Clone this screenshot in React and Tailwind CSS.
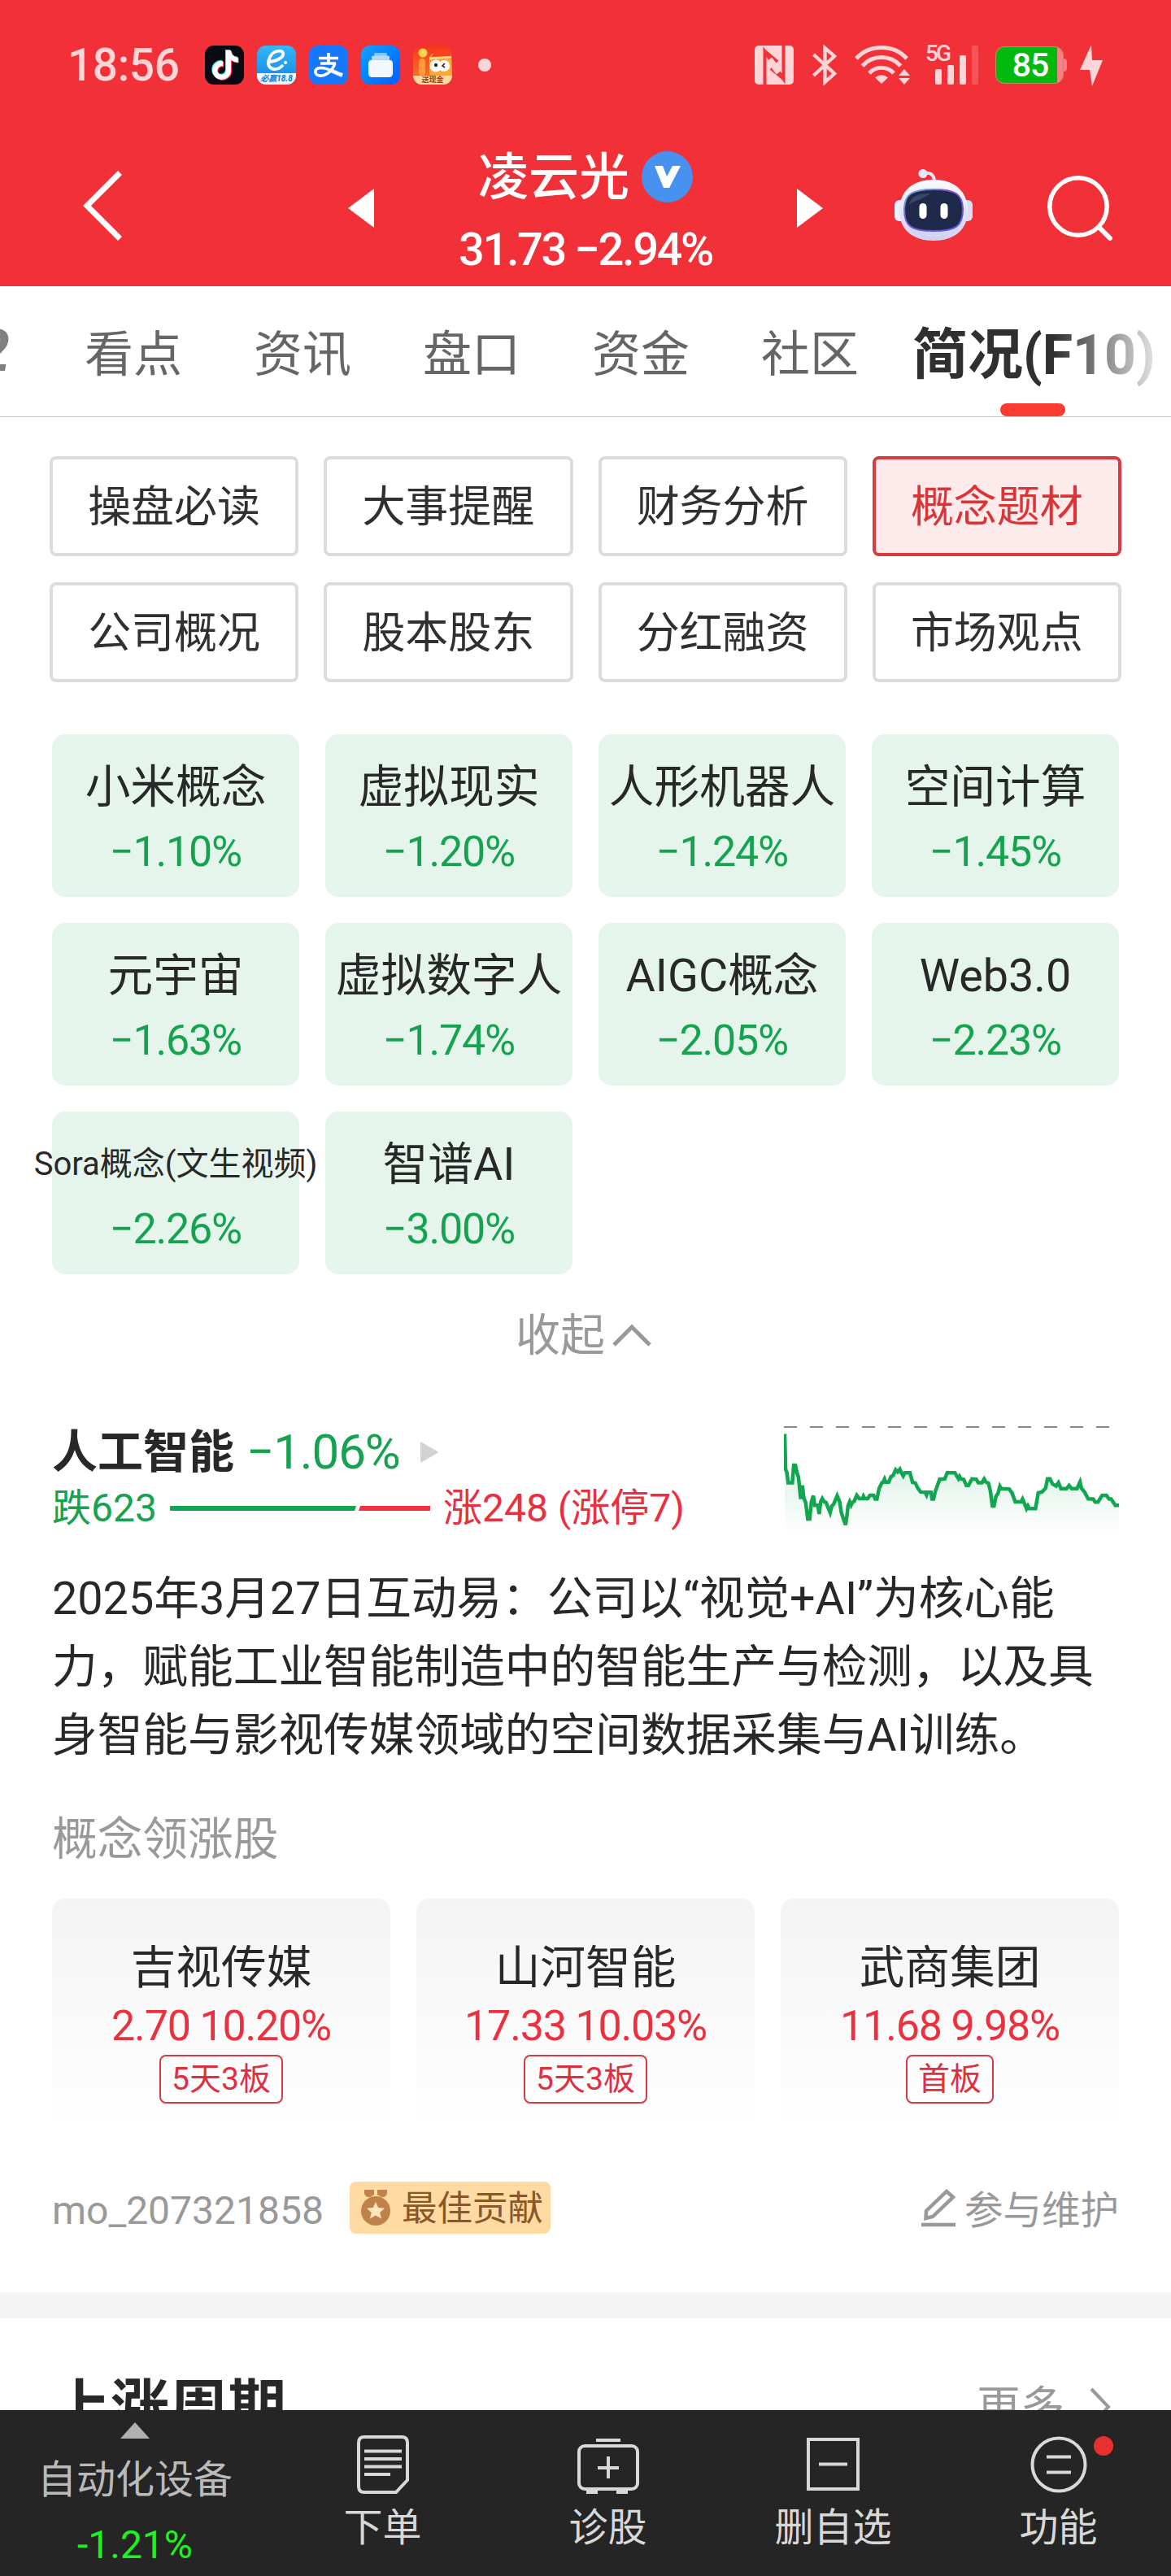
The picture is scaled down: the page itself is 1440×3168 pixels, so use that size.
import { FaTiktok } from 'react-icons/fa6';

const tabs = ['看点', '资讯', '盘口', '资金', '社区'];

const sections = [
    { label: '操盘必读' },
    { label: '大事提醒' },
    { label: '财务分析' },
    { label: '概念题材', active: true },
    { label: '公司概况' },
    { label: '股本股东' },
    { label: '分红融资' },
    { label: '市场观点' },
];

const concepts = [
    { name: '小米概念', change: '−1.10%' },
    { name: '虚拟现实', change: '−1.20%' },
    { name: '人形机器人', change: '−1.24%' },
    { name: '空间计算', change: '−1.45%' },
    { name: '元宇宙', change: '−1.63%' },
    { name: '虚拟数字人', change: '−1.74%' },
    { name: 'AIGC概念', change: '−2.05%' },
    { name: 'Web3.0', change: '−2.23%' },
    { name: 'Sora概念(文生视频)', change: '−2.26%', small: true },
    { name: '智谱AI', change: '−3.00%' },
];

const leaders = [
    { name: '吉视传媒', price: '2.70', change: '10.20%', tag: '5天3板' },
    { name: '山河智能', price: '17.33', change: '10.03%', tag: '5天3板' },
    { name: '武商集团', price: '11.68', change: '9.98%', tag: '首板' },
];

// intraday index line, x/y in the chart's viewBox
const trendLine =
    'M189 190 L192 320 L197 335 L201 370 L216 370 L221 306 L227 306 L233 335 L238 350 L246 430 L252 380 L257 425 L264 445 L271 503 L278 503 L284 440 L291 418 L296 453 L307 453 L312 485 L317 440 L323 428 L330 440 L337 443 L343 460 L351 480 L357 455 L363 450 L376 418 L385 440 L391 480 L399 505 L406 525 L411 490 L415 455 L421 440 L426 452 L430 443 L437 438 L446 416 L455 428 L467 428 L470 420 L474 428 L485 428 L493 416 L506 416 L512 430 L518 430 L526 390 L536 370 L540 368 L545 357 L549 368 L560 368 L568 348 L576 343 L585 322 L592 330 L600 320 L606 335 L612 345 L618 333 L636 333 L645 368 L655 371 L664 390 L674 404 L690 405 L695 415 L698 405 L711 405 L715 430 L720 430 L727 400 L742 357 L760 356 L769 333 L796 333 L803 345 L809 355 L813 347 L818 356 L828 358 L837 380 L845 380 L857 356 L872 357 L880 370 L893 370 L901 356 L908 368 L916 371 L923 400 L930 455 L936 455 L943 420 L950 410 L957 383 L962 392 L990 393 L1000 407 L1012 440 L1033 440 L1038 430 L1043 442 L1052 465 L1057 455 L1062 465 L1084 465 L1094 407 L1107 404 L1120 390 L1127 356 L1136 356 L1145 375 L1158 382 L1166 370 L1175 392 L1195 392 L1204 380 L1213 392 L1232 392 L1243 367 L1248 390 L1260 405 L1272 429 L1290 430 L1297 441 L1307 441 L1322 416 L1337 416 L1347 430 L1354 430 L1369 453 L1382 453';

const StatusBar = () => (
    <div className="h-[160px] flex items-center pl-[83px] pr-[84px]">
        <span className="w-[169px] text-[55px] leading-none font-medium text-[#fdd5d7] tracking-[-0.4px]">18:56</span>
        <div className="flex items-center gap-4">
            <div className="relative w-12 h-12 rounded-[11px] bg-[#0a0a14]">
                <FaTiktok size={36} color="#25f4ee" className="absolute left-[6px] top-[5px]" />
                <FaTiktok size={36} color="#fe2c55" className="absolute left-[8px] top-[7px]" />
                <FaTiktok size={36} color="#fff" className="absolute left-[7px] top-[6px]" />
            </div>
            <div className="w-12 h-12 rounded-[11px] overflow-hidden bg-gradient-to-b from-[#35b6f5] to-[#0b86e6] flex flex-col">
                <svg viewBox="0 0 48 34" className="w-12 h-[34px]">
                    <path d="M14 20 C22 20 34 15 32 9 C30 5 20 6 16 14 C11 24 16 29 22 29 C26 29 29 27 31 25" fill="none" stroke="#fff" strokeWidth="3.8" strokeLinecap="round" />
                    <circle cx="35" cy="21" r="2" fill="#fff" />
                </svg>
                <div className="h-[14px] bg-[#e8f7ff] text-[10px] leading-[13px] font-bold italic text-center text-[#0878d2] whitespace-nowrap">必赢18.8</div>
            </div>
            <div className="w-12 h-12 rounded-[11px] bg-[#1677ff]">
                <svg viewBox="0 0 48 48" className="w-12 h-12" fill="none" stroke="#fff">
                    <path d="M12 15.5 H36 M24 9 V22 M14 22 H33" strokeWidth="3.6" />
                    <path d="M32 22 C28 33 19 38 13 37 C6 36 6 28 14 27.500 C23 27 31 33 41 36" strokeWidth="3.6" />
                    <path d="M27 30.500 C32 33 36 35 41 36.500" strokeWidth="5" opacity=".75" />
                </svg>
            </div>
            <div className="w-12 h-12 rounded-[11px] bg-gradient-to-br from-[#1aa0ff] to-[#0a5cff]">
                <svg viewBox="0 0 48 48" className="w-12 h-12">
                    <rect x="16" y="9" width="16" height="4" rx="1.500" fill="#8ac4ff" />
                    <rect x="13" y="12.500" width="22" height="5" rx="1.500" fill="#b4d9ff" />
                    <rect x="9" y="17.500" width="30" height="21.500" rx="4.500" fill="#f1f8ff" />
                </svg>
            </div>
            <div className="w-12 h-12 rounded-[11px] overflow-hidden bg-gradient-to-b from-[#f3331f] to-[#fb7a2b] flex flex-col">
                <svg viewBox="0 0 48 37" className="w-12 h-[37px]">
                    <path d="M20 37 V16 C20 6 44 6 47 16 L48 37 Z" fill="#ffa63a" />
                    <path d="M27 8 C30 3 37 3 41 7 L46 6 V13 L22 14 Z" fill="#f7441f" />
                    <path d="M20 16 L47 14" stroke="#ffd98a" strokeWidth="2.500" />
                    <rect x="7" y="16" width="8" height="21" rx="4" fill="#ff9a3b" />
                    <circle cx="12" cy="9" r="5.500" fill="#ffd24c" />
                    <circle cx="28" cy="25" r="7.500" fill="#fff" />
                    <circle cx="38" cy="25" r="7" fill="#fff" />
                    <circle cx="28" cy="24" r="2.200" fill="#3a2222" />
                    <path d="M39 22 L36 25 L39 27" stroke="#3a2222" strokeWidth="1.600" fill="none" />
                </svg>
                <div className="h-[11px] bg-[#ffd9a0] text-[9px] leading-[10px] font-bold text-center text-[#9a3d10]">送现金</div>
            </div>
        </div>
        <span className="ml-8 w-4 h-4 rounded-full bg-[#fdd5d7]" />

        <div className="ml-auto flex items-center text-[#fdd5d7]">
            {/* NFC */}
            <svg viewBox="0 0 48 48" className="w-12 h-12">
                <rect width="48" height="48" rx="5" fill="currentColor" />
                <path d="M12.500 48 V7.500 L35.500 41 V0" fill="none" stroke="#f13038" strokeWidth="4" />
                <path d="M12.500 7 L28 20 M35.500 41 L20 28" fill="none" stroke="#f13038" strokeWidth="4" />
                <path d="M18 17 L30 33" stroke="currentColor" strokeWidth="8" />
            </svg>
            {/* Bluetooth */}
            <svg viewBox="0 0 30 50" className="ml-[23px] w-[30px] h-[50px]" fill="none" stroke="currentColor" strokeWidth="4.300">
                <path d="M1.500 12 L27 35.500 L15.500 46 V4 L27 14 L1.500 38" />
            </svg>
            {/* Wi-Fi */}
            <svg viewBox="0 0 68 48" className="ml-[22px] w-[68px] h-12" fill="none" stroke="currentColor" strokeWidth="5">
                <path d="M2 16 C18 -2 48 -2 64 16" />
                <path d="M9.500 25 C22 11 44 11 56.500 25" />
                <path d="M18 34 C26 25 40 25 48 34" />
                <path d="M33 47 L25 39.500 Q33 33 41 39.500 Z" fill="currentColor" stroke="none" />
                <path d="M54 37 L61 29 L68 37 Z M54 40 L61 48 L68 40 Z" fill="currentColor" stroke="none" />
            </svg>
            {/* Signal */}
            <div className="ml-[19px] w-[63px] h-12 flex items-end relative">
                <span className="absolute left-0 -top-[2px] text-[28px] leading-6 font-medium tracking-[-3px]">5G</span>
                <div className="ml-3 flex items-end gap-[7px]">
                    <span className="w-2 h-[19px] rounded-[2px] bg-current" />
                    <span className="w-2 h-6 rounded-[2px] bg-current" />
                    <span className="w-2 h-9 rounded-[2px] bg-current" />
                    <span className="w-2 h-12 rounded-[2px] bg-[#f5545a]" />
                </div>
            </div>
            {/* Battery */}
            <div className="ml-[23px] flex items-center">
                <div className="w-[84px] h-[46px] rounded-[11px] border border-[#b9935f] bg-[#f87f84] overflow-hidden">
                    <div className="w-[75px] h-full bg-[#05b80f] text-white text-[41px] leading-[45px] font-medium text-center pl-[9px] tracking-[-1px]">85</div>
                </div>
                <span className="w-1 h-4 rounded-r-[4px] bg-[#f87f84]" />
            </div>
            <svg viewBox="0 0 28 51" className="ml-4 w-7 h-[51px]" fill="currentColor">
                <path d="M14 0 L0 31 H12 L15 51 L28 19 H15 Z" />
            </svg>
        </div>
    </div>
);

const Robot = () => (
    <svg viewBox="0 0 96 88" className="ml-[88px] -mt-2 w-24 h-[88px]">
        <defs>
            <linearGradient id="shell" x1="0" y1="0" x2="0" y2="1">
                <stop offset="0" stopColor="#fbfaff" />
                <stop offset="1" stopColor="#cfd0f0" />
            </linearGradient>
            <linearGradient id="rim" x1="0" y1="0" x2="1" y2="1">
                <stop offset="0" stopColor="#5ac6d8" />
                <stop offset=".4" stopColor="#7b4fd0" />
                <stop offset="1" stopColor="#4f5be8" />
            </linearGradient>
        </defs>
        <path d="M35 6 C44 2 49 8 49 15" fill="none" stroke="#e6e2f8" strokeWidth="4" />
        <circle cx="35" cy="5.500" r="5.500" fill="#eae6fb" />
        <rect x="0" y="38" width="14" height="26" rx="6" fill="#eeeefc" />
        <rect x="82" y="38" width="14" height="26" rx="6" fill="#dcdcf6" />
        <path d="M48 13 C77 13 90 30 90 51 C90 75 73 88 48 88 C23 88 6 75 6 51 C6 30 19 13 48 13 Z" fill="url(#shell)" />
        <path d="M48 25 C74 25 84 30 84 50 C84 71 74 76 48 76 C22 76 12 71 12 50 C12 30 22 25 48 25 Z" fill="#1f2a4a" stroke="url(#rim)" strokeWidth="2" />
        <path d="M18 43 C21 32 30 30 44 30 C36 36 28 38 18 43 Z" fill="#39456a" />
        <rect x="30.500" y="42" width="9" height="19" rx="4.500" fill="#fff" />
        <rect x="56.500" y="42" width="9" height="19" rx="4.500" fill="#fff" />
    </svg>
);

const Header = () => (
    <header className="h-[352px] bg-[#f13038] text-white">
        <StatusBar />
        <div className="h-48 flex items-center pl-[102px]">
            <svg viewBox="0 0 48 86" className="-mt-[6px] w-12 h-[86px]" fill="none" stroke="currentColor" strokeWidth="7">
                <path d="M45.500 2.500 L5 43 L45.500 83.500" />
            </svg>
            <svg viewBox="0 0 32 48" className="ml-[278px] w-8 h-12" fill="currentColor">
                <path d="M32 0 L0 24 L32 48 Z" />
            </svg>
            <div className="w-[520px] self-start pt-[25px] flex flex-col items-center">
                <div className="h-16 flex items-center">
                    <span className="text-[62px] leading-[64px] pt-1 font-medium">凌云光</span>
                    <span className="ml-[15px] w-[63px] h-[63px] rounded-full bg-[#4991ee] flex items-center justify-center">
                        <svg viewBox="0 0 32 27" className="w-8 h-[27px]" fill="#fff">
                            <path d="M0 0 H10 L15 13 L22 0 H32 L18 27 H11 Z" />
                        </svg>
                    </span>
                </div>
                <span className="mt-[26px] h-16 text-[56px] leading-[64px] font-medium tracking-[-2.4px] whitespace-nowrap">31.73 −2.94%</span>
            </div>
            <svg viewBox="0 0 32 48" className="w-8 h-12" fill="currentColor">
                <path d="M0 0 L32 24 L0 48 Z" />
            </svg>
            <Robot />
            <svg viewBox="0 0 80 80" className="ml-[92px] w-20 h-20" fill="none" stroke="currentColor" strokeWidth="5.500">
                <circle cx="38" cy="38" r="35.200" />
                <path d="M63 63 L77 77" strokeWidth="6" strokeLinecap="round" />
            </svg>
        </div>
    </header>
);

const Tabs = () => (
    <div className="relative h-[161px] border-b border-[#c6c6c6] flex overflow-hidden text-[60px] leading-[160px] text-[#666] whitespace-nowrap">
        <span className="w-[104px] shrink-0 -ml-[28px] mr-[28px] text-[72px] font-bold italic text-[#808080]">2</span>
        <div className="flex gap-[88px] pt-[5px]">
            {tabs.map((tab) => (
                <span key={tab}>{tab}</span>
            ))}
        </div>
        <div className="ml-[66px] flex flex-col items-center relative">
            <span className="text-[68px] font-bold text-[#303030] pt-[5px]">简况(F10)</span>
            <span className="absolute bottom-0 left-[108px] w-20 h-4 rounded-full bg-[#fb3c31]" />
        </div>
        <div className="absolute right-0 top-0 w-[144px] h-[140px] bg-gradient-to-r from-transparent to-white" />
    </div>
);

const TrendChart = () => (
    <svg viewBox="186 156 1196 404" preserveAspectRatio="none" className="w-[412px] h-[135px]">
        <defs>
            <linearGradient id="fade" x1="0" y1="310" x2="0" y2="560" gradientUnits="userSpaceOnUse">
                <stop offset="0" stopColor="#12a650" stopOpacity=".14" />
                <stop offset="1" stopColor="#12a650" stopOpacity="0" />
            </linearGradient>
        </defs>
        <path d="M186 165 H1382" stroke="#888" strokeWidth="6" strokeDasharray="46.450 46.450" />
        <path d={`${trendLine} V560 H189 Z`} fill="url(#fade)" />
        <path d={trendLine} fill="none" stroke="#12a650" strokeWidth="4.500" vectorEffect="non-scaling-stroke" />
    </svg>
);

const navItems = [
    {
        label: '下单',
        icon: (
            <svg viewBox="0 0 64 72" className="w-16 h-[72px]" fill="none" stroke="currentColor" strokeWidth="4">
                <path d="M9 2 H55 Q62 2 62 9 V55 L48 70 H9 Q2 70 2 63 V9 Q2 2 9 2 Z" />
                <path d="M9 19.500 H55 M9 29 H55 M9 38.500 H55 M9 48 H41" />
            </svg>
        ),
    },
    {
        label: '诊股',
        icon: (
            <svg viewBox="0 0 76 72" className="w-[76px] h-[72px]" fill="none" stroke="currentColor" strokeWidth="4">
                <rect x="2" y="13" width="72" height="53" rx="7" />
                <path d="M23 6 H53 M38 26 V53 M25 40 H51" />
                <path d="M11 70 H25 M48 70 H62" />
            </svg>
        ),
    },
    {
        label: '删自选',
        icon: (
            <svg viewBox="0 0 65 72" className="w-[65px] h-[72px]" fill="none" stroke="currentColor" strokeWidth="4">
                <rect x="2" y="5" width="61" height="61" />
                <path d="M15 35.500 H50" />
            </svg>
        ),
    },
    {
        label: '功能',
        badge: true,
        icon: (
            <svg viewBox="0 0 70 72" className="w-[70px] h-[72px]" fill="none" stroke="currentColor" strokeWidth="4">
                <circle cx="35" cy="36" r="32.500" />
                <path d="M20 26.500 H50 M20 45.500 H50" />
            </svg>
        ),
    },
];

const BottomNav = () => (
    <nav className="h-[204px] shrink-0 bg-[#252525] text-[#d8d8d8] text-[48px] flex">
        <div className="w-[332px] flex flex-col items-center text-[#bababa]">
            <svg viewBox="0 0 36 20" className="mt-[15px] w-9 h-5" fill="#b0b0b0">
                <path d="M18 0 L36 20 H0 Z" />
            </svg>
            <span className="mt-[21px] leading-[60px]">自动化设备</span>
            <span className="mt-[20px] leading-[60px] text-[#1cf51c]">-1.21%</span>
        </div>
        {navItems.map((item) => (
            <div key={item.label} className="relative w-[277px] pt-[31px] flex flex-col items-center">
                {item.icon}
                <span className="mt-[12px] leading-[60px]">{item.label}</span>
                {item.badge && <span className="absolute left-[182px] top-8 w-6 h-6 rounded-full bg-[#e83030]" />}
            </div>
        ))}
    </nav>
);

const App = () => {
    return (
        <div className="w-[1440px] h-[3168px] overflow-hidden flex flex-col bg-white text-[#282828] font-['Roboto','Noto_Sans_CJK_SC',sans-serif]">
            <Header />
            <main className="flex-1 min-h-0 overflow-hidden">
                <Tabs />

                {/* F10 sections */}
                <div className="mt-12 pl-[61px] pr-[61px] grid grid-cols-4 gap-x-[31px] gap-y-8">
                    {sections.map((s) => (
                        <button
                            key={s.label}
                            className={`h-[123px] rounded-[8px] border-4 text-[53px] leading-none pt-1 ${s.active ? 'border-[#d83a3e] bg-[#fdeaeb] text-[#dc3337]' : 'border-[#dcdcdc] text-[#303030]'}`}
                        >
                            {s.label}
                        </button>
                    ))}
                </div>

                {/* Concept tiles */}
                <div className="mt-16 px-16 grid grid-cols-4 gap-8">
                    {concepts.map((c) => (
                        <div key={c.name} className="h-[200px] rounded-2xl bg-[#e5f5eb] flex flex-col items-center whitespace-nowrap">
                            <span className={`mt-[33px] leading-[64px] ${c.small ? 'text-[40px]' : 'text-[55.7px]'}`}>{c.name}</span>
                            <span className="mt-[16px] text-[52px] leading-[64px] text-[#16a34f] tracking-[-1.2px]">{c.change}</span>
                        </div>
                    ))}
                </div>

                <div className="mt-[43px] pr-[5px] h-16 flex items-center justify-center text-[55px] text-[#999]">
                    <span className="leading-[64px]">收起</span>
                    <svg viewBox="0 0 48 28" className="ml-[9px] w-12 h-7" fill="none" stroke="currentColor" strokeWidth="5">
                        <path d="M2 26 L24 4 L46 26" />
                    </svg>
                </div>

                <div className="mt-[78px] px-16 flex justify-between">
                    <div className="pt-[2px]">
                        <div className="h-16 flex items-center">
                            <span className="text-[56px] leading-[64px] font-bold">人工智能</span>
                            <span className="ml-[15px] text-[60px] leading-[64px] text-[#16a34f] tracking-[-1.1px]">−1.06%</span>
                            <svg viewBox="0 0 22 26" className="ml-[25px] w-[22px] h-[26px]" fill="#d2d2d2">
                                <path d="M0 2 Q0 0 2 1 L21 12 Q22 13 21 14 L2 25 Q0 26 0 24 Z" />
                            </svg>
                        </div>
                        <div className="mt-[7px] h-[60px] flex items-center text-[48px] leading-[60px]">
                            <span className="text-[#16a34f]">跌623</span>
                            <svg viewBox="0 0 320 6" className="ml-[16px] w-80 h-[6px]">
                                <path d="M1 0 H229 L227 6 H1 Q0 6 0 5 V1 Q0 0 1 0 Z" fill="#12a650" />
                                <path d="M234 0 H320 V6 H232 Z" fill="#f2303e" />
                            </svg>
                            <span className="ml-[16px] text-[#ea3040]">涨248 (涨停7)</span>
                        </div>
                    </div>
                    <TrendChart />
                </div>

                <p className="mt-[37px] px-16 text-[55.7px] leading-[84px] whitespace-nowrap">
                    2025年3月27日互动易：公司以“视觉+AI”为核心能
                    <br />
                    力，赋能工业智能制造中的智能生产与检测，以及具
                    <br />
                    身智能与影视传媒领域的空间数据采集与AI训练。
                </p>

                {/* Leading stocks */}
                <h3 className="mt-[54px] px-16 text-[55.7px] leading-[64px] text-[#999]">概念领涨股</h3>
                <div className="mt-[41px] px-16 grid grid-cols-3 gap-8">
                    {leaders.map((stock) => (
                        <div key={stock.name} className="h-[285px] rounded-t-2xl bg-gradient-to-b from-[#f4f4f4] to-white flex flex-col items-center">
                            <span className="mt-[53px] text-[55.7px] leading-[64px]">{stock.name}</span>
                            <span className="mt-[14px] text-[52px] leading-[52px] text-[#ee2f3d] tracking-[-1.2px]">
                                {stock.price} {stock.change}
                            </span>
                            <span className="mt-[9px] h-[60px] px-[13px] rounded-[8px] border-2 border-[#d83a48] text-[39px] leading-[57px] text-[#e03040]">
                                {stock.tag}
                            </span>
                        </div>
                    ))}
                </div>

                <div className="mt-[63px] h-16 px-16 flex items-center text-[#999]">
                    <span className="text-[48px] leading-[64px] pt-[8px]">mo_207321858</span>
                    <span className="ml-[32px] w-[247px] h-16 rounded-[8px] bg-[#ffdaa3] flex items-center pl-[14px] text-[#8a5726]">
                        <svg viewBox="0 0 36 44" className="w-9 h-11" fill="#bf834a">
                            <path d="M4 0 H16 V6 L11 9 H8 Q4 7 4 4 Z M20 0 H32 V4 Q32 7 28 9 H25 L20 6 Z" />
                            <circle cx="18" cy="26" r="18" />
                            <path d="M18 15 L21.200 22 L29 22.800 L23.200 28 L25 35.500 L18 31.500 L11 35.500 L12.800 28 L7 22.800 L14.800 22 Z" fill="#ffe4bd" />
                        </svg>
                        <span className="ml-[14px] pt-[3px] text-[43.5px] leading-[61px]">最佳贡献</span>
                    </span>
                    <svg viewBox="0 0 44 48" className="ml-auto w-11 h-12" fill="none" stroke="currentColor" strokeWidth="4.500">
                        <path d="M32 4 L40 11 L15 35 L6.500 37 L7 28 Z" />
                        <path d="M1 45 H43" />
                    </svg>
                    <span className="ml-[10px] text-[47.500px] leading-[64px] pt-[8px]">参与维护</span>
                </div>

                <div className="mt-[72px] h-8 bg-[#f4f4f4]" />

                {/* Next section, partly under the bottom bar */}
                <div className="mt-[67px] pl-16 pr-[74px] h-20 flex items-center">
                    <h2 className="text-[72px] leading-[80px] pt-[5px] font-bold">上涨周期</h2>
                    <span className="ml-auto text-[54px] leading-[80px] pt-2 text-[#999]">更多</span>
                    <svg viewBox="0 0 26 48" className="ml-[31px] mt-1 w-[26px] h-12" fill="none" stroke="#999" strokeWidth="4">
                        <path d="M2 2 L23 24 L2 46" />
                    </svg>
                </div>
            </main>
            <BottomNav />
        </div>
    );
};

export default App;
